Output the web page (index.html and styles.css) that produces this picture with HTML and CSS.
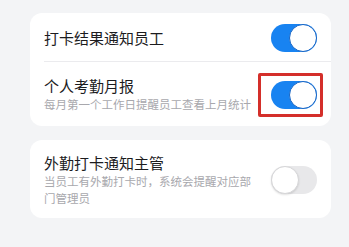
FILE: index.html
```html
<!DOCTYPE html>
<html lang="zh-CN">
<head>
<meta charset="utf-8">
<link rel="stylesheet" href="styles.css">
</head>
<body>
<div class="page">
  <section class="card">
    <div class="row row-single">
      <div class="texts">
        <div class="title">打卡结果通知员工</div>
      </div>
      <span class="toggle on"><span class="knob"></span></span>
    </div>
    <div class="divider"></div>
    <div class="row row-double">
      <div class="texts">
        <div class="title">个人考勤月报</div>
        <div class="sub">每月第一个工作日提醒员工查看上月统计</div>
      </div>
      <span class="toggle-wrap">
        <span class="toggle on"><span class="knob"></span></span>
        <span class="highlight"></span>
      </span>
    </div>
  </section>
  <section class="card card-second">
    <div class="row row-double row-wrap">
      <div class="texts">
        <div class="title">外勤打卡通知主管</div>
        <div class="sub">当员工有外勤打卡时，系统会提醒对应部门管理员</div>
      </div>
      <span class="toggle off"><span class="knob"></span></span>
    </div>
  </section>
</div>
</body>
</html>
```
FILE: styles.css
```css
html, body {
  margin: 0;
  padding: 0;
  background: #f3f4f6;
}
body {
  font-family: "Noto Sans CJK SC", "Noto Sans", sans-serif;
  color: #1c1c1e;
  width: 349px;
  height: 247px;
  overflow: hidden;
}
.page {
  padding: 13px 18px 0 30px;
  display: flex;
  flex-direction: column;
  gap: 14px;
}
.card {
  background: #ffffff;
  border-radius: 12px;
}
.row {
  display: flex;
  align-items: center;
  justify-content: space-between;
  padding: 0 14px;
}
.row-single {
  height: 48px;
  padding-top: 2px;
  box-sizing: border-box;
}
.row-double {
  padding-top: 14px;
  padding-bottom: 13px;
}
.row-wrap {
  padding-top: 13px;
  padding-bottom: 11px;
}
.texts {
  display: flex;
  flex-direction: column;
  width: 212px;
}
.title {
  font-size: 15px;
  line-height: 20px;
  color: #1c1c1e;
}
.sub {
  font-size: 11.5px;
  line-height: 17px;
  color: #a8a8ad;
}
.divider {
  height: 1px;
  background: #ebebee;
  margin-left: 14px;
}
.toggle {
  position: relative;
  display: block;
  width: 46px;
  height: 28px;
  border-radius: 14px;
  box-sizing: border-box;
  flex-shrink: 0;
}
.toggle.on {
  background: #1883f1;
}
.toggle.off {
  background: #e8e8ea;
}
.knob {
  position: absolute;
  top: 0;
  width: 28px;
  height: 28px;
  border-radius: 50%;
  background: #ffffff;
  box-sizing: border-box;
}
.toggle.on .knob {
  right: 0;
  border: 1.5px solid #1664c4;
}
.toggle.off .knob {
  left: 0;
  border: 1px solid #d6d6d8;
  box-shadow: 0 1px 2px rgba(0, 0, 0, 0.12);
}
.toggle-wrap {
  position: relative;
  display: block;
}
.highlight {
  position: absolute;
  left: -13px;
  top: -8px;
  right: -6px;
  bottom: -8px;
  border: 3px solid #d42f2a;
  border-radius: 2px;
}
```
